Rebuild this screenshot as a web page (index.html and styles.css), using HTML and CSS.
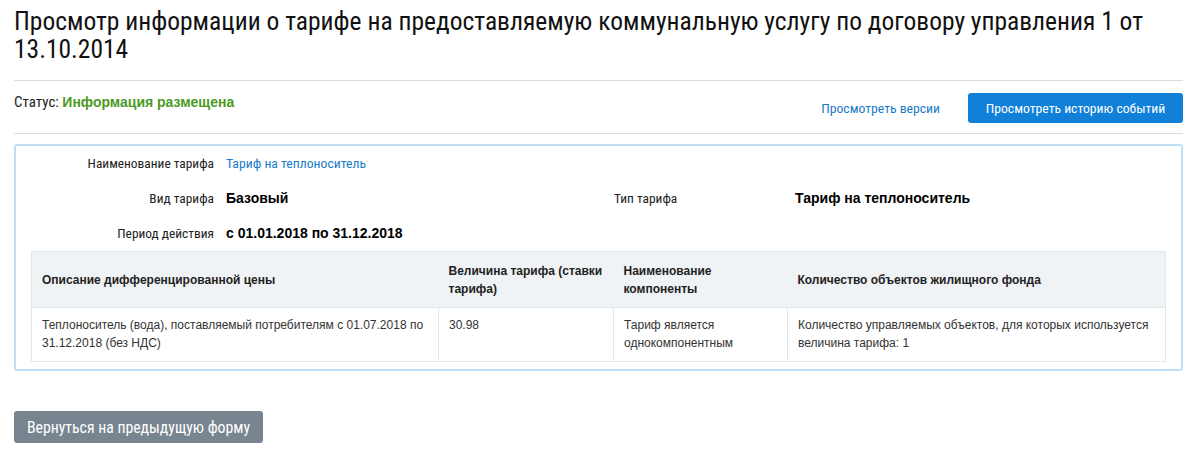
FILE: index.html
```html
<!DOCTYPE html>
<html lang="ru">
<head>
<meta charset="utf-8">
<link rel="stylesheet" href="styles.css">
</head>
<body>
<div class="page">
  <h1 class="title">Просмотр информации о тарифе на предоставляемую коммунальную услугу по договору управления 1 от 13.10.2014</h1>
  <div class="status-bar">
    <div class="status">Статус: <span class="status-value">Информация размещена</span></div>
    <div class="actions">
      <a class="link" href="#">Просмотреть версии</a>
      <button class="btn btn-primary">Просмотреть историю событий</button>
    </div>
  </div>
  <div class="panel">
    <div class="fields">
      <div class="field"><span class="label">Наименование тарифа</span><span class="value link-value">Тариф на теплоноситель</span></div>
      <div class="field-row">
        <div class="field"><span class="label">Вид тарифа</span><span class="value bold">Базовый</span></div>
        <div class="field field-right"><span class="label label-left">Тип тарифа</span><span class="value bold">Тариф на теплоноситель</span></div>
      </div>
      <div class="field"><span class="label">Период действия</span><span class="value bold">с 01.01.2018 по 31.12.2018</span></div>
    </div>
    <table class="table">
      <thead>
        <tr>
          <th class="c1">Описание дифференцированной цены</th>
          <th class="c2">Величина тарифа (ставки тарифа)</th>
          <th class="c3">Наименование компоненты</th>
          <th class="c4">Количество объектов жилищного фонда</th>
        </tr>
      </thead>
      <tbody>
        <tr>
          <td>Теплоноситель (вода), поставляемый потребителям с 01.07.2018 по 31.12.2018 (без НДС)</td>
          <td>30.98</td>
          <td>Тариф является однокомпонентным</td>
          <td>Количество управляемых объектов, для которых используется величина тарифа: 1</td>
        </tr>
      </tbody>
    </table>
  </div>
  <div class="footer">
    <button class="btn btn-secondary">Вернуться на предыдущую форму</button>
  </div>
</div>
</body>
</html>
```
FILE: styles.css
```css
* { box-sizing: border-box; }
body {
  margin: 0;
  background: #fff;
  color: #000;
  font-family: "Liberation Sans", Arial, sans-serif;
}
.page {
  padding: 0 12px 0 14px;
}
.title {
  margin: 0;
  padding-top: 7px;
  font-family: "Roboto Condensed", Roboto, sans-serif;
  font-stretch: condensed;
  font-weight: 400;
  font-size: 25.5px;
  line-height: 28px;
  color: #111;
  padding-bottom: 17px;
  border-bottom: 1px solid #d8dde3;
}
.status-bar {
  display: flex;
  justify-content: space-between;
  align-items: flex-start;
  padding: 11px 0 10px;
  border-bottom: 1px solid #d8dde3;
}
.status {
  font-family: "Roboto Condensed", Roboto, sans-serif;
  font-stretch: condensed;
  font-size: 15px;
  line-height: 20px;
  color: #222;
}
.status-value {
  font-family: "Liberation Sans", Arial, sans-serif;
  font-size: 14px;
  font-weight: bold;
  color: #4a9a23;
}
.actions {
  display: flex;
  align-items: center;
  gap: 28px;
  margin-top: 1px;
}
.link {
  font-family: "Roboto Condensed", Roboto, sans-serif;
  font-stretch: condensed;
  font-size: 13.7px;
  color: #1a7cc9;
  text-decoration: none;
}
.btn {
  border: none;
  border-radius: 3px;
  font-family: "Roboto Condensed", Roboto, sans-serif;
  font-stretch: condensed;
  color: #fff;
  white-space: nowrap;
  cursor: pointer;
}
.btn-primary {
  background: #1080d9;
  height: 30px;
  width: 215px;
  padding: 0;
  font-size: 13.7px;
}
.btn-secondary {
  background: #78848f;
  height: 32px;
  width: 249px;
  padding: 0;
  font-size: 15.8px;
}
.panel {
  margin-top: 10px;
  border: 2px solid #bfdff6;
  border-radius: 3px;
  padding: 9px 15px 7px 15px;
}
.fields {
  display: flex;
  flex-direction: column;
  gap: 17px;
  padding-bottom: 8px;
}
.field-row {
  display: flex;
}
.field {
  display: flex;
  align-items: baseline;
  gap: 12px;
  height: 18px;
}
.field-row > .field:first-child {
  width: 583px;
}
.label {
  width: 183px;
  text-align: right;
  font-family: "Roboto Condensed", Roboto, sans-serif;
  font-stretch: condensed;
  font-size: 13.4px;
  color: #222;
}
.label-left {
  text-align: left;
  width: 169px;
}
.value {
  font-size: 14px;
}
.link-value {
  font-family: "Roboto Condensed", Roboto, sans-serif;
  font-stretch: condensed;
  font-size: 13.7px;
  color: #1a7cc9;
}
.bold { font-weight: bold; }
.table {
  width: 100%;
  border-collapse: collapse;
  font-size: 12px;
  border: 1px solid #e3e8ed;
}
.table th {
  background: #f0f3f6;
  text-align: left;
  font-weight: bold;
  color: #222;
  padding: 9px 10px;
  height: 56px;
  line-height: 18px;
  vertical-align: middle;
}
.table td {
  padding: 8px 10px;
  vertical-align: top;
  line-height: 18px;
  color: #333;
  border: 1px solid #e3e8ed;
  height: 54px;
}
.c1 { width: 407px; }
.c2 { width: 175px; }
.c3 { width: 174px; }
.footer {
  padding-top: 40px;
}
```
